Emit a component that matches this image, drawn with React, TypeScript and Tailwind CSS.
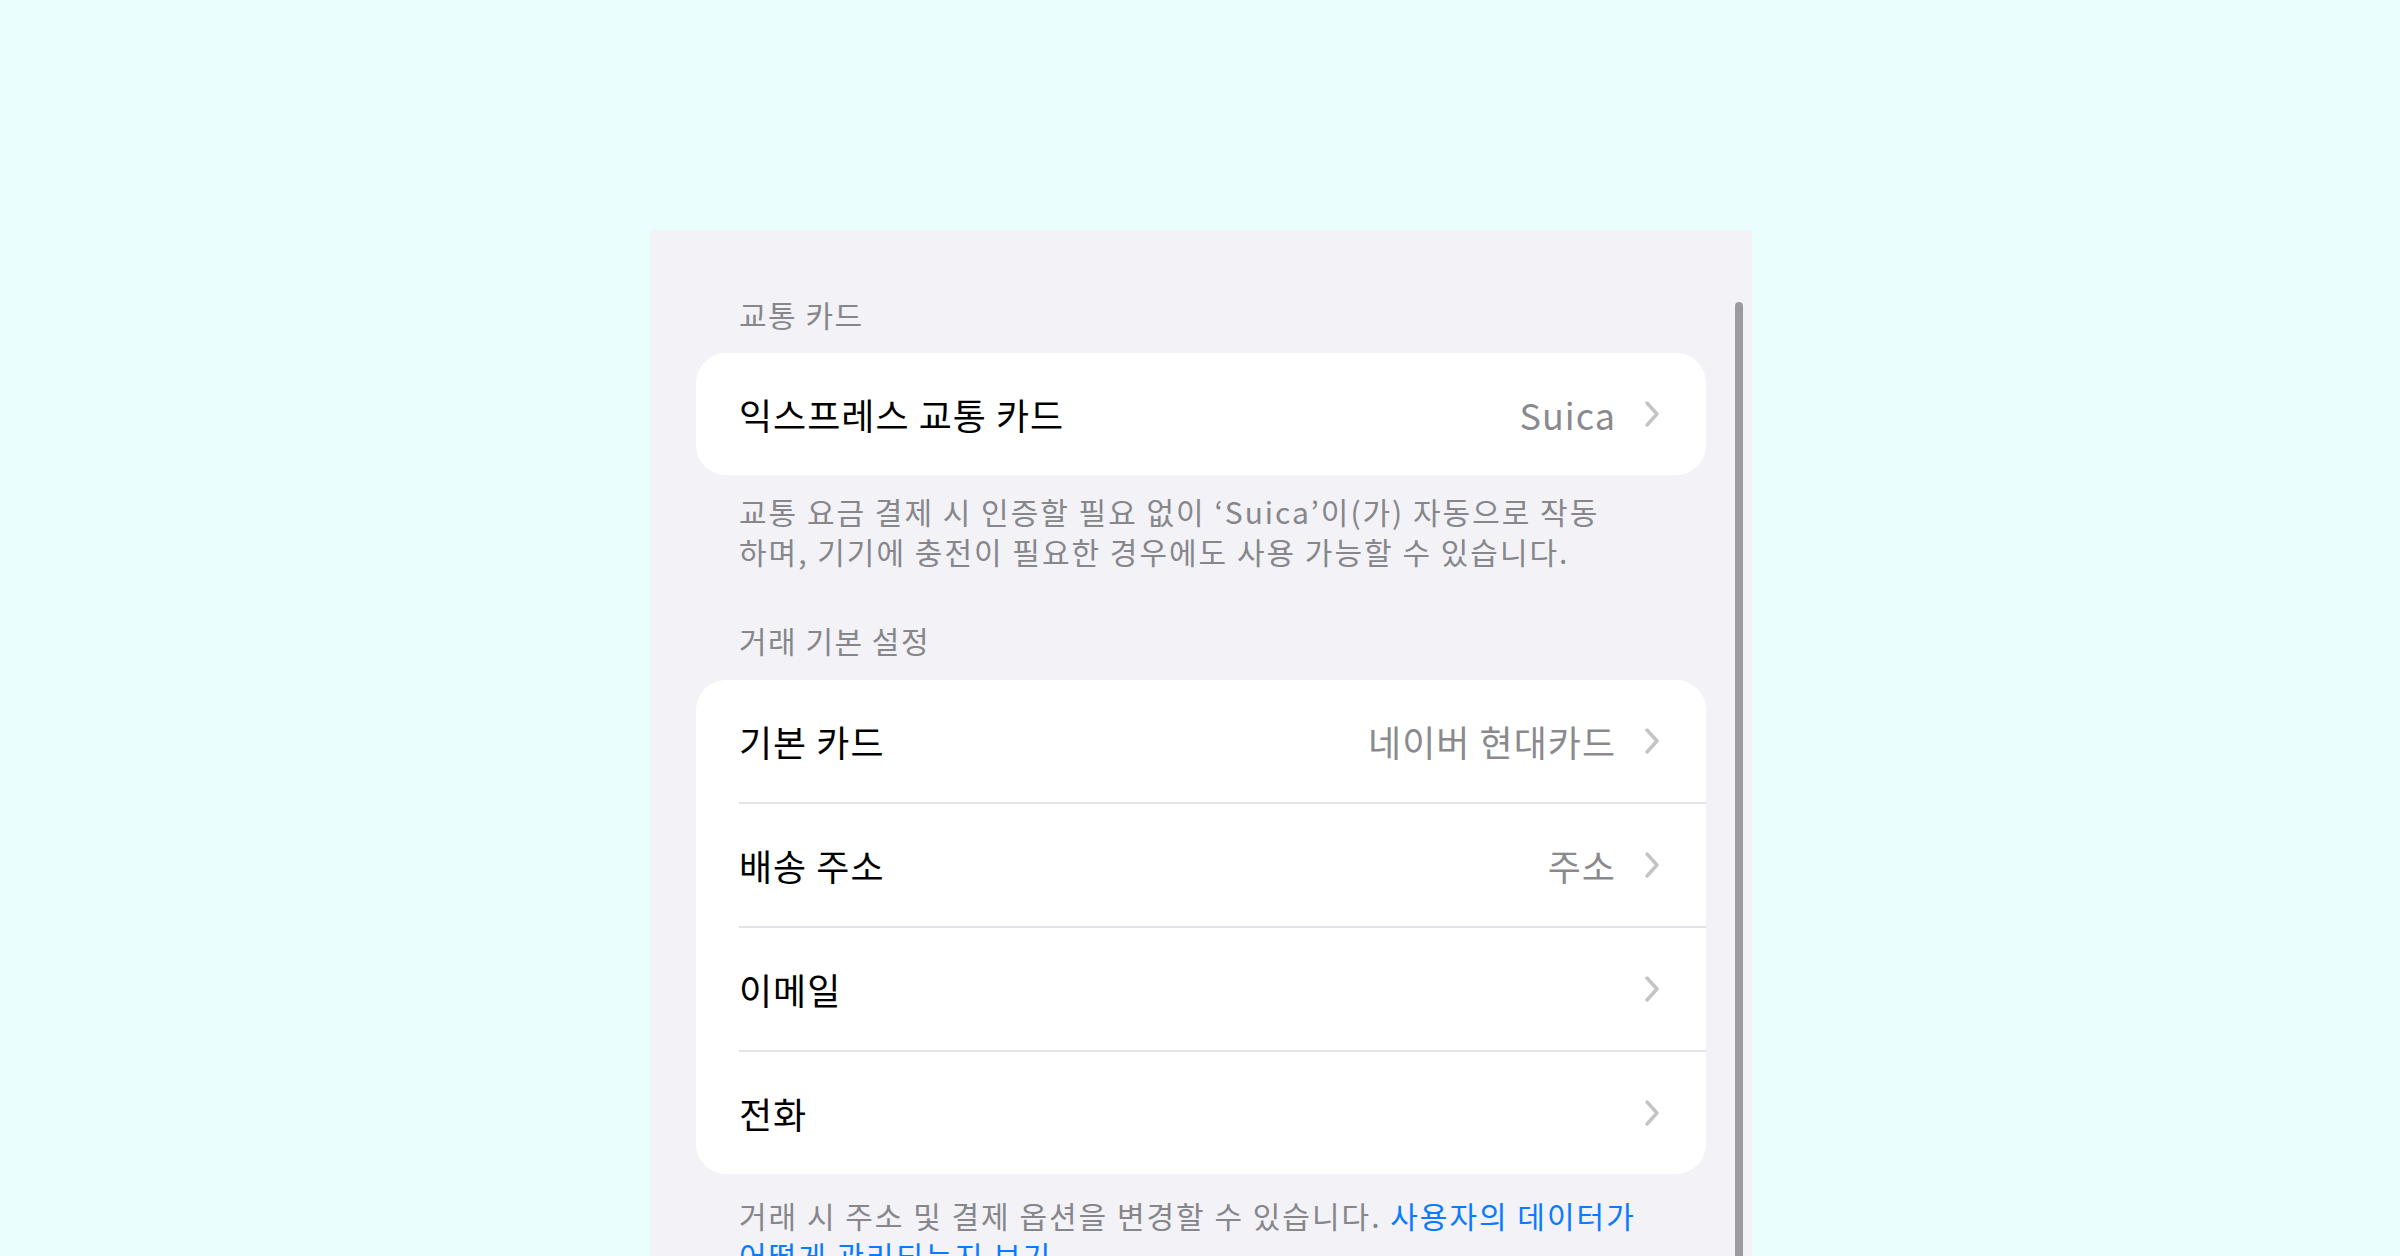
import React from 'react';

const font = { fontFamily: '"Noto Sans CJK KR", "Noto Sans", sans-serif' };

const Chevron: React.FC = () => (
  <svg width="16" height="28" viewBox="0 0 16 28" fill="none" className="shrink-0">
    <path d="M3 3 L13 14 L3 25" stroke="#c4c4c7" strokeWidth="3.5" strokeLinecap="round" strokeLinejoin="round" />
  </svg>
);

type RowProps = { label: string; value?: string; last?: boolean };

const Row: React.FC<RowProps> = ({ label, value, last }) => (
  <div className="flex flex-col">
    <div className="flex items-center h-[122px] pl-[43px] pr-[46px]">
      <span className="flex-1 text-[36px] text-black tracking-[1px]">{label}</span>
      {value && <span className="text-[36px] text-[#8a8a8e] mr-[28px] tracking-[1px]">{value}</span>}
      <Chevron />
    </div>
    {!last && <div className="ml-[43px] h-[2px] bg-[#e3e3e7]" />}
  </div>
);

const SectionHeader: React.FC<{ children: React.ReactNode }> = ({ children }) => (
  <div className="pl-[43px] h-[40px] leading-[40px] text-[30px] tracking-[1.5px] text-[#86868b]">{children}</div>
);

const App: React.FC = () => {
  const rows = [
    { label: '기본 카드', value: '네이버 현대카드' },
    { label: '배송 주소', value: '주소' },
    { label: '이메일' },
    { label: '전화' },
  ];

  return (
    <div className="w-full h-[1256px] bg-[#eafefe] overflow-hidden" style={font}>
      <div className="relative ml-[650px] mt-[230px] w-[1102px] h-[1026px] bg-[#f2f2f7] px-[46px] pt-[64px]">
        {/* scroll indicator */}
        <div className="absolute right-[9px] top-[72px] bottom-0 w-[8px] rounded-t-full bg-[#9c9ca0]" />

        <SectionHeader>교통 카드</SectionHeader>
        <div className="mt-[19px] bg-white rounded-[30px] overflow-hidden">
          <Row label="익스프레스 교통 카드" value="Suica" last />
        </div>
        <p className="mt-[16px] pl-[43px] text-[30px] tracking-[2px] leading-[40px] text-[#86868b]">
          교통 요금 결제 시 인증할 필요 없이 ‘Suica’이(가) 자동으로 작동
          <br />
          하며, 기기에 충전이 필요한 경우에도 사용 가능할 수 있습니다.
        </p>

        <div className="mt-[49px]">
          <SectionHeader>거래 기본 설정</SectionHeader>
        </div>
        <div className="mt-[20px] bg-white rounded-[30px] overflow-hidden">
          {rows.map((r, i) => (
            <Row key={r.label} label={r.label} value={r.value} last={i === rows.length - 1} />
          ))}
        </div>
        <p className="mt-[21px] pl-[43px] text-[30px] tracking-[2px] leading-[40px] text-[#86868b]">
          거래 시 주소 및 결제 옵션을 변경할 수 있습니다.{' '}
          <span className="text-[#0a7aff]">사용자의 데이터가</span>
          <br />
          <span className="text-[#0a7aff]">어떻게 관리되는지 보기</span>
        </p>
      </div>
    </div>
  );
};

export default App;
